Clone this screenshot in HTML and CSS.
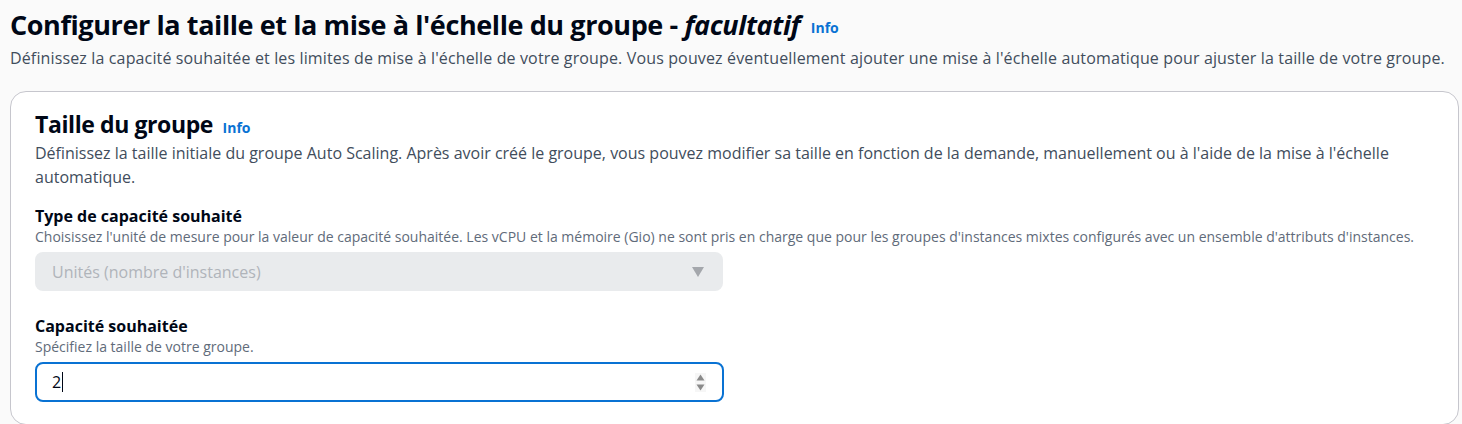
FILE: index.html
```html
<!DOCTYPE html>
<html lang="fr">
<head>
<meta charset="utf-8">
<title>Taille du groupe</title>
<link rel="stylesheet" href="styles.css">
</head>
<body>
<div class="page">
  <header class="page-header">
    <h1 class="page-title">Configurer la taille et la mise à l'échelle du groupe - <em>facultatif</em> <a class="info info-raised" href="#">Info</a></h1>
    <p class="page-desc">Définissez la capacité souhaitée et les limites de mise à l'échelle de votre groupe. Vous pouvez éventuellement ajouter une mise à l'échelle automatique pour ajuster la taille de votre groupe.</p>
  </header>
  <section class="container">
    <h2 class="container-title">Taille du groupe <a class="info" href="#">Info</a></h2>
    <p class="container-desc">Définissez la taille initiale du groupe Auto Scaling. Après avoir créé le groupe, vous pouvez modifier sa taille en fonction de la demande, manuellement ou à l'aide de la mise à l'échelle automatique.</p>
    <div class="field">
      <div class="label">Type de capacité souhaité</div>
      <div class="hint">Choisissez l'unité de mesure pour la valeur de capacité souhaitée. Les vCPU et la mémoire (Gio) ne sont pris en charge que pour les groupes d'instances mixtes configurés avec un ensemble d'attributs d'instances.</div>
      <div class="select">
        <span class="select-value">Unités (nombre d'instances)</span>
        <svg class="caret-down" width="12" height="10" viewBox="0 0 12 10"><path d="M0 0h12L6 10z" fill="#a4a7ac"/></svg>
      </div>
    </div>
    <div class="field">
      <div class="label">Capacité souhaitée</div>
      <div class="hint">Spécifiez la taille de votre groupe.</div>
      <div class="input">
        <span class="input-value">2</span><span class="text-caret"></span>
        <svg class="spinner" width="11" height="19" viewBox="0 0 11 19"><rect width="11" height="19" fill="#f6f6f6"/><path d="M1.5 7.5L5.5 1.5L9.5 7.5z" fill="#8a8a8a"/><path d="M1.5 11.5L5.5 17.5L9.5 11.5z" fill="#8a8a8a"/></svg>
      </div>
    </div>
  </section>
</div>
</body>
</html>
```
FILE: styles.css
```css
* { box-sizing: border-box; }
html, body { margin: 0; padding: 0; }
body {
  background: #fafafa;
  font-family: "Open Sans", "Noto Sans", sans-serif;
  color: #000716;
  overflow: hidden;
}
.page {
  padding: 8px 3px 0 10px;
}
.page-title {
  margin: 0;
  font-size: 27px;
  line-height: 34px;
  font-weight: 700;
  letter-spacing: -0.4px;
  color: #000716;
}
.page-title em { font-style: italic; }
.info {
  font-size: 14px;
  line-height: 1;
  font-weight: 700;
  letter-spacing: 0;
  color: #0972d3;
  text-decoration: none;
  margin-left: 4px;
}
.info-raised { vertical-align: 2px; }
.page-desc {
  margin: 5px 0 0;
  font-size: 16px;
  line-height: 23px;
  letter-spacing: 0.14px;
  color: #414d5c;
}
.container {
  margin-top: 21px;
  background: #ffffff;
  border: 1px solid #c6c6cd;
  border-radius: 16px;
  padding: 18px 24px 22px;
}
.container-title {
  margin: 0;
  font-size: 23px;
  line-height: 28px;
  font-weight: 700;
  letter-spacing: -0.4px;
}
.container-title .info { margin-left: 4px; }
.container-desc {
  margin: 3px 0 0;
  font-size: 16px;
  line-height: 24px;
  color: #414d5c;
}
.field { margin-top: 16px; }
.field + .field { margin-top: 24px; }
.label {
  font-size: 16px;
  line-height: 22px;
  font-weight: 700;
  color: #000716;
}
.hint {
  font-size: 14px;
  line-height: 20px;
  color: #5f6b7a;
  margin-bottom: 5px;
}
.select {
  width: 688px;
  height: 39px;
  background: #e9ebed;
  border-radius: 8px;
  display: flex;
  align-items: center;
  justify-content: space-between;
  padding: 0 19px 0 17px;
}
.select-value {
  font-size: 16px;
  color: #b0b4ba;
}
.input {
  width: 689px;
  height: 40px;
  border: 2px solid #0972d3;
  border-radius: 8px;
  background: #fff;
  display: flex;
  align-items: center;
  padding: 0 16px 0 15px;
}
.input-value {
  font-size: 16px;
  color: #000716;
}
.text-caret {
  width: 1px;
  height: 20px;
  background: #000716;
  margin-left: 1px;
}
.spinner { margin-left: auto; }
```
